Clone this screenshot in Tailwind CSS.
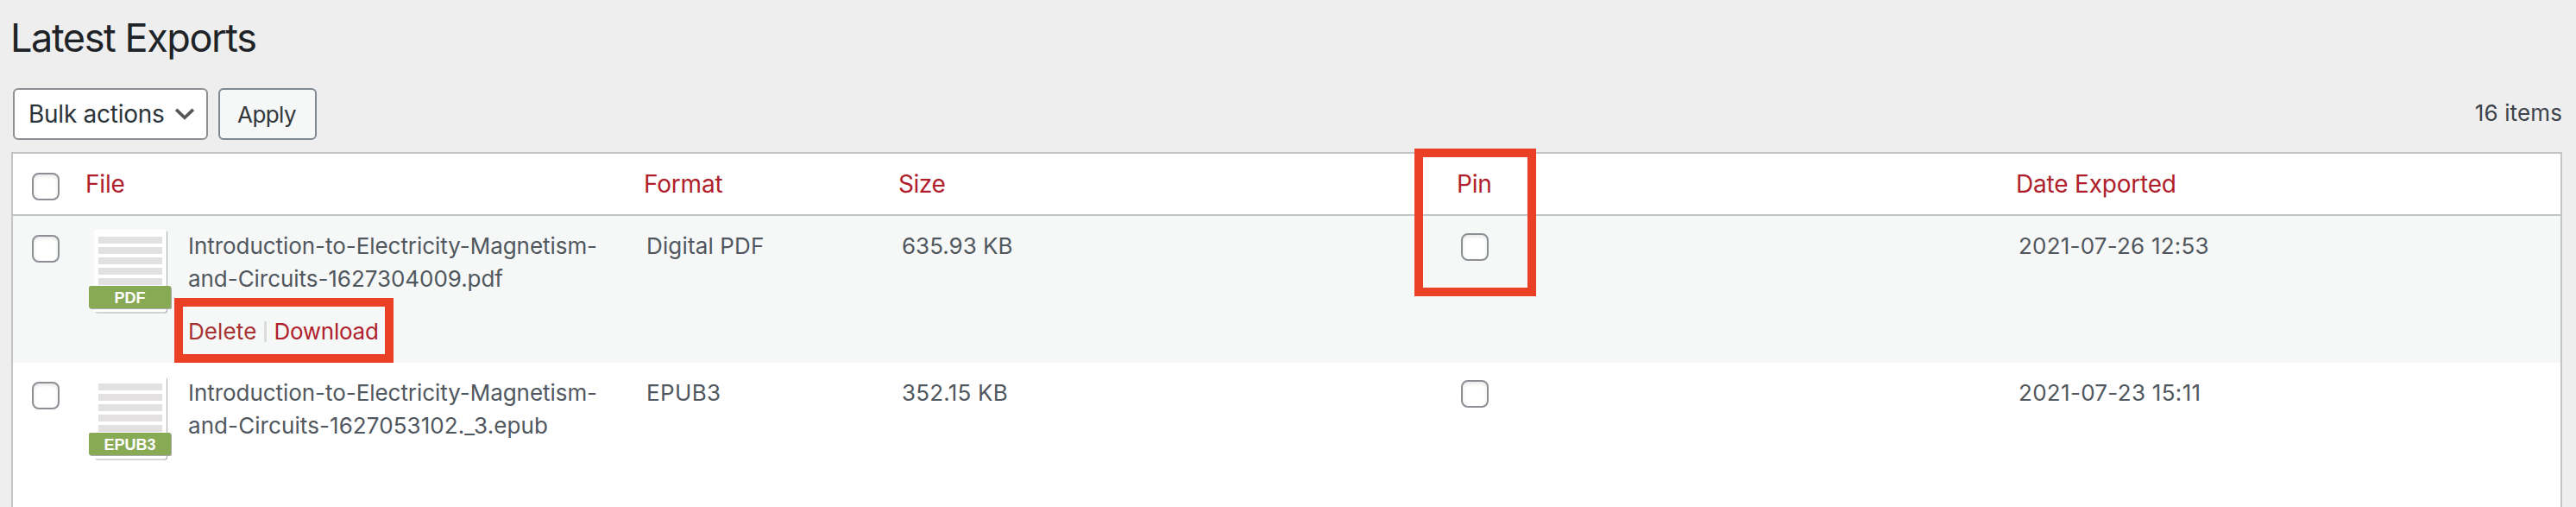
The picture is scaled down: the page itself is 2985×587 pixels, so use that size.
<!DOCTYPE html>
<html lang="en">
<head>
    <meta charset="UTF-8">
    <meta name="viewport" content="width=device-width, initial-scale=1.0">
    <title>Latest Exports</title>
    <script src="https://cdn.jsdelivr.net/npm/@tailwindcss/browser@4"></script>
</head>
<body class="h-[587px] overflow-hidden bg-[#eeeeee] pl-[13px] pr-4 font-['Inter',sans-serif] text-[26px] leading-[38px] text-[#50575e]">
    <h1 class="-ml-px h-[102px] pt-px text-[45px] leading-[86px] tracking-[-1.4px] text-[#1d2327]">Latest Exports</h1>

    <!-- Toolbar -->
    <div class="flex h-[60px] items-center pl-[2px]">
        <button class="flex h-[60px] w-[226px] items-center rounded-md border-2 border-[#8c8f94] bg-white pl-4 text-[28px] tracking-[-0.26px] text-[#2c3338]">
            <span class="whitespace-nowrap">Bulk actions</span>
            <svg class="ml-3 h-[14px] w-[22px] shrink-0" viewBox="0 0 22 14" fill="none" stroke="#555" stroke-width="3.6"><path d="M1.2 1.8 11 11.2 20.8 1.8"/></svg>
        </button>
        <button class="ml-3 h-[60px] w-[114px] rounded-md border-2 border-[#7e8993] bg-[#f6f7f7] pr-[2px] pt-px tracking-[-0.6px] text-[#32373c]">Apply</button>
        <span class="mb-[2px] ml-auto tracking-[0.13px] text-[#3c434a]">16 items</span>
    </div>

    <!-- Exports table -->
    <div class="relative mt-[14px] h-[440px] border-2 border-[#c3c4c7] bg-white">
        <div class="grid h-[72px] grid-cols-[83px_647px_296px_647px_647px_1fr] items-center border-b-2 border-[#c3c4c7] text-[28px] tracking-[-0.2px] text-[#b01e2b]">
            <input type="checkbox" class="ml-[22px] mt-[6px] size-8 appearance-none rounded-lg border-2 border-[#8c8f94] bg-white shadow-[inset_0_2px_4px_rgba(0,0,0,0.1)]">
            <span class="pl-px">File</span>
            <span class="pl-px">Format</span>
            <span class="tracking-[-0.45px]">Size</span>
            <span>Pin</span>
            <span class="pl-px tracking-[-0.2px]">Date Exported</span>
        </div>

        <div class="relative grid h-[170px] grid-cols-[83px_647px_296px_647px_647px_1fr] items-start bg-[#f6f7f7] pt-4">
            <input type="checkbox" class="ml-[22px] mt-[6px] size-8 appearance-none rounded-lg border-2 border-[#8c8f94] bg-white shadow-[inset_0_2px_4px_rgba(0,0,0,0.1)]">
            <div class="flex">
                <svg class="ml-[5px] h-[97px] w-[97px] shrink-0" viewBox="0 0 97 97">
                    <rect x="7" y="1" width="84" height="95.5" rx="3" fill="#a9abac"/>
                    <rect x="6" y="0" width="84" height="95.5" rx="3" fill="#fff"/>
                    <path d="M11 8h74v8H11zM11 20h74v8H11zM11 32h74v8H11zM11 44h74v8H11zM11 56h74v8H11z" fill="#e2e0e1"/>
                    <rect x="1" y="66" width="95" height="26" rx="2" fill="#a9abac"/>
                    <rect x="0" y="65" width="95" height="26" rx="2" fill="#88aa55"/>
                    <text x="47.5" y="85" text-anchor="middle" font-family="Liberation Sans" font-weight="700" font-size="18" fill="#fff">PDF</text>
                </svg>
                <div class="ml-[18px] whitespace-nowrap">
                    <div class="tracking-[-0.05px]">Introduction-to-Electricity-Magnetism-<br>and-Circuits-1627304009.pdf</div>
                    <div class="mt-[23px] flex items-center">
                        <a class="tracking-[0.1px] text-[#a83232]">Delete</a>
                        <span class="ml-[9px] mr-2 h-6 w-[3px] bg-[#dcdcde]"></span>
                        <a class="tracking-[-0.25px] text-[#b01e2b]">Download</a>
                    </div>
                </div>
            </div>
            <span class="pl-1 tracking-[0.15px]">Digital PDF</span>
            <span class="pl-1">635.93 KB</span>
            <input type="checkbox" class="ml-[5px] mt-1 size-8 appearance-none rounded-lg border-2 border-[#8c8f94] bg-white shadow-[inset_0_2px_4px_rgba(0,0,0,0.1)]">
            <span class="pl-1 tracking-[0.21px]">2021-07-26 12:53</span>
            <!-- Highlight around row actions -->
            <div class="absolute left-[187px] top-[95px] h-[75px] w-[254px] border-[10px] border-[#ea4025]"></div>
        </div>

        <div class="grid h-[170px] grid-cols-[83px_647px_296px_647px_647px_1fr] items-start bg-white pt-4">
            <input type="checkbox" class="ml-[22px] mt-[6px] size-8 appearance-none rounded-lg border-2 border-[#8c8f94] bg-white shadow-[inset_0_2px_4px_rgba(0,0,0,0.1)]">
            <div class="flex">
                <svg class="ml-[5px] h-[97px] w-[97px] shrink-0" viewBox="0 0 97 97">
                    <rect x="7" y="1" width="84" height="95.5" rx="3" fill="#a9abac"/>
                    <rect x="6" y="0" width="84" height="95.5" rx="3" fill="#fff"/>
                    <path d="M11 8h74v8H11zM11 20h74v8H11zM11 32h74v8H11zM11 44h74v8H11zM11 56h74v8H11z" fill="#e2e0e1"/>
                    <rect x="1" y="66" width="95" height="26" rx="2" fill="#a9abac"/>
                    <rect x="0" y="65" width="95" height="26" rx="2" fill="#88aa55"/>
                    <text x="47.5" y="85" text-anchor="middle" font-family="Liberation Sans" font-weight="700" font-size="18" fill="#fff">EPUB3</text>
                </svg>
                <div class="ml-[18px] whitespace-nowrap tracking-[-0.05px]">
                    Introduction-to-Electricity-Magnetism-<br><span class="tracking-[0.08px]">and-Circuits-1627053102._3.epub</span>
                </div>
            </div>
            <span class="pl-1 tracking-[0.35px]">EPUB3</span>
            <span class="pl-1 tracking-[0.2px]">352.15 KB</span>
            <input type="checkbox" class="ml-[5px] mt-1 size-8 appearance-none rounded-lg border-2 border-[#8c8f94] bg-white shadow-[inset_0_2px_4px_rgba(0,0,0,0.1)]">
            <span class="pl-1 tracking-[0.3px]">2021-07-23 15:11</span>
        </div>

        <!-- Highlight around the Pin column -->
        <div class="absolute left-[1624px] top-[-6px] h-[171px] w-[141px] border-[10px] border-[#ea4025]"></div>
    </div>
</body>
</html>
